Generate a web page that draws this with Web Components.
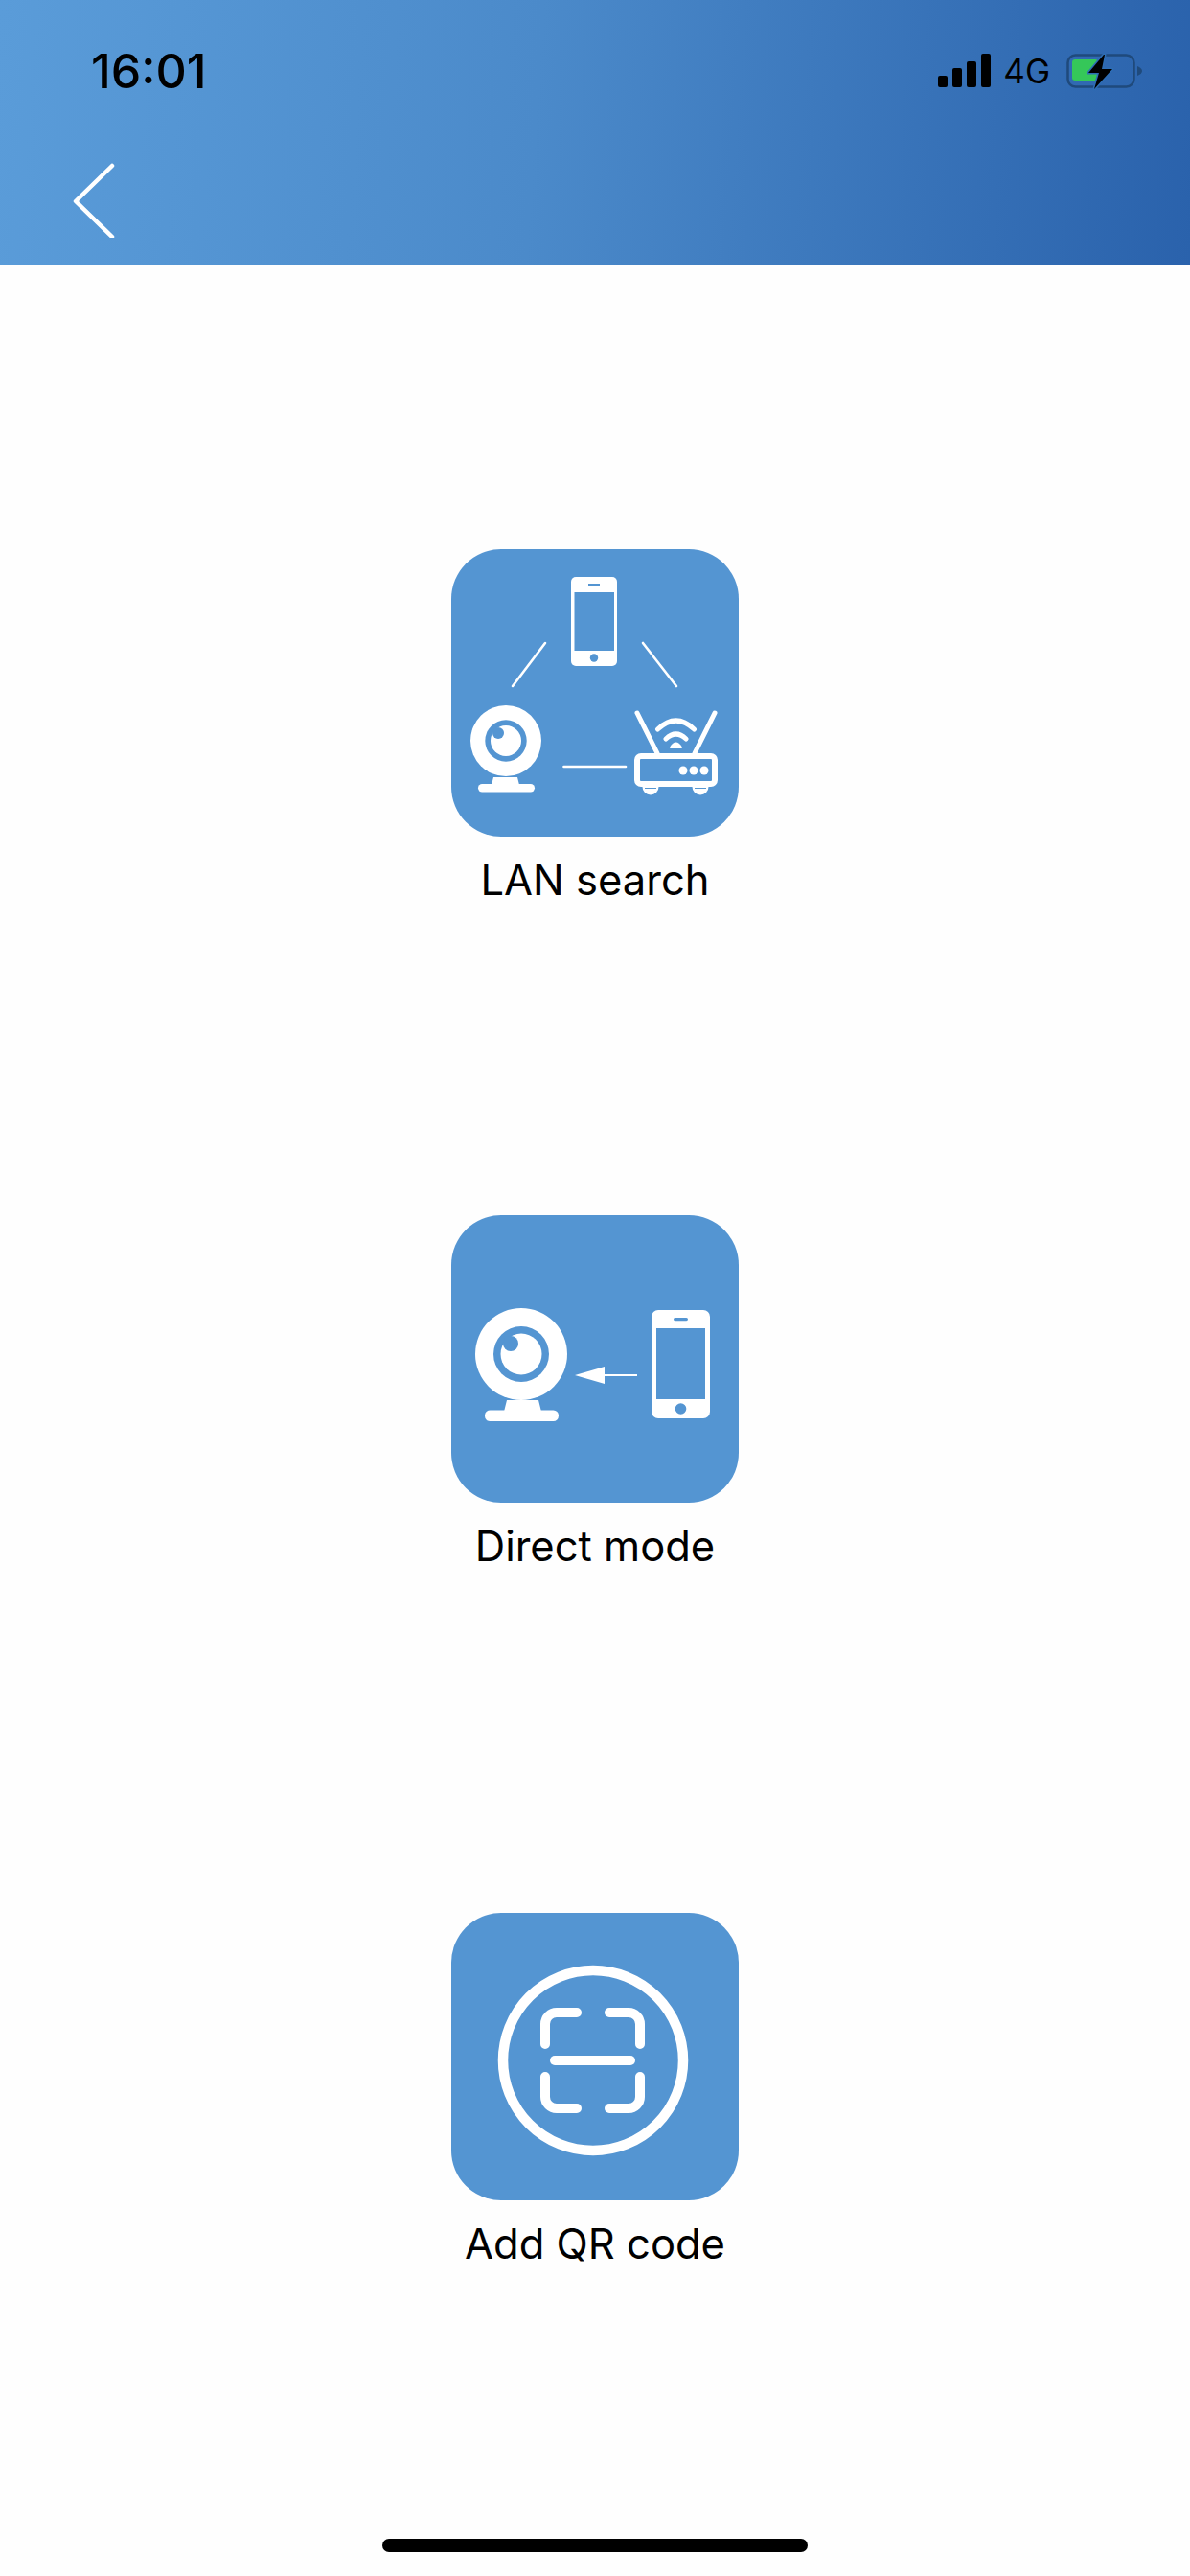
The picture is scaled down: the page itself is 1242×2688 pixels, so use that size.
<!DOCTYPE html>
<html lang="en">
<head>
<meta charset="utf-8">
<title>Add device</title>
<style>
  html, body { margin: 0; padding: 0; background: #fefefe; }
  body { font-family: Inter, "Liberation Sans", sans-serif; color: #000; }
  .page { width: 1242px; height: 2688px; display: flex; flex-direction: column; overflow: hidden; }
  svg { display: block; }
</style>
</head>
<body>
<div class="page">
  <top-header time="16:01" network="4G"></top-header>
  <option-list>
    <device-option style="margin-top:296px">
      <svg slot="icon" width="300" height="300" viewBox="0 0 300 300">
        <!-- phone -->
        <rect x="125" y="29" width="48" height="93" rx="5" fill="#fff"/>
        <rect x="128.5" y="45" width="41.5" height="61" fill="#5495d2"/>
        <rect x="143" y="36" width="12" height="2.5" fill="#5495d2"/>
        <circle cx="149" cy="113.500" r="4.200" fill="#5495d2"/>
        <!-- links -->
        <g stroke="#fff" stroke-width="2.600" stroke-linecap="round" fill="none">
          <path d="M98 98 64 143"/>
          <path d="M200 98 235 143"/>
          <path d="M117.500 227H182"/>
        </g>
        <!-- camera -->
        <circle cx="57" cy="200" r="37" fill="#fff"/>
        <circle cx="57" cy="200" r="21.700" fill="#5495d2"/>
        <circle cx="57" cy="200" r="16" fill="#fff"/>
        <circle cx="49" cy="192" r="6" fill="#5495d2"/>
        <path d="M44 238H69L71 246H42Z" fill="#fff"/>
        <rect x="28" y="245" width="59" height="8.500" rx="4.200" fill="#fff"/>
        <!-- router -->
        <g stroke="#fff" stroke-linecap="round" fill="none">
          <path d="M194 171 215 213" stroke-width="5"/>
          <path d="M275 171 254 213" stroke-width="5"/>
          <path d="M215.500 188Q234.500 170 253.500 188" stroke-width="5"/>
          <path d="M224 198Q234.500 188 245 198" stroke-width="5"/>
        </g>
        <path d="M229 207Q234.500 198 240 207Z" fill="#fff" stroke="#fff" stroke-width="2" stroke-linejoin="round"/>
        <circle cx="208" cy="248" r="8.500" fill="#fff"/>
        <circle cx="260" cy="248" r="8.500" fill="#fff"/>
        <rect x="194" y="216" width="81" height="29" rx="4" fill="#5495d2" stroke="#fff" stroke-width="6"/>
        <path d="M202 249.500H214M254 249.500H266" stroke="#5495d2" stroke-width="1.200"/>
        <circle cx="242" cy="231" r="4.500" fill="#fff"/>
        <circle cx="253" cy="231" r="4.500" fill="#fff"/>
        <circle cx="264" cy="231" r="4.500" fill="#fff"/>
      </svg>
      LAN search
    </device-option>
    <device-option style="margin-top:295px">
      <svg slot="icon" width="300" height="300" viewBox="0 0 300 300">
        <!-- camera -->
        <circle cx="73" cy="145" r="48" fill="#fff"/>
        <circle cx="73" cy="145" r="29" fill="#5495d2"/>
        <circle cx="73" cy="145" r="21.500" fill="#fff"/>
        <circle cx="62" cy="134" r="8" fill="#5495d2"/>
        <path d="M58 193H91L94 205H55Z" fill="#fff"/>
        <rect x="35" y="203.500" width="77" height="11.500" rx="5.500" fill="#fff"/>
        <!-- arrow -->
        <path d="M194 167H158" stroke="#fff" stroke-width="2.200"/>
        <path d="M129 167 160 158V176Z" fill="#fff"/>
        <!-- phone -->
        <rect x="209" y="99" width="61" height="113" rx="7" fill="#fff"/>
        <rect x="214" y="118" width="51" height="74" fill="#5495d2"/>
        <rect x="232" y="107" width="15" height="3.200" rx="1.600" fill="#5495d2"/>
        <circle cx="239.500" cy="202" r="5.800" fill="#5495d2"/>
      </svg>
      Direct mode
    </device-option>
    <device-option style="margin-top:328px">
      <svg slot="icon" width="300" height="300" viewBox="0 0 300 300">
        <circle cx="148" cy="154" r="94" fill="none" stroke="#fff" stroke-width="10.500"/>
        <g fill="none" stroke="#fff" stroke-width="10" stroke-linecap="round">
          <path d="M131 104H110A12 12 0 0 0 98 116V137"/>
          <path d="M165 104H185A12 12 0 0 1 197 116V137"/>
          <path d="M98 171V192A12 12 0 0 0 110 204H131"/>
          <path d="M197 171V192A12 12 0 0 1 185 204H165"/>
          <path d="M108 154H187"/>
        </g>
      </svg>
      Add QR code
    </device-option>
  </option-list>
  <home-indicator></home-indicator>
</div>

<template id="top-header-tpl">
  <style>
    :host {
      display: block;
      box-sizing: border-box;
      height: 277px;
      background: linear-gradient(94deg, #5a9cd9 0%, #4b8aca 45%, #2a62ac 100%);
      border-bottom: 1px solid #c9ccd0;
    }
    .status {
      display: flex;
      align-items: center;
      justify-content: space-between;
      height: 148px;
      padding: 0 49px 0 95px;
      color: #000;
    }
    .time { font: 500 50px/1 Inter, "Liberation Sans", sans-serif; }
    .right { display: flex; align-items: center; gap: 13px; }
    .net { font: 400 35px/1 Inter, "Liberation Sans", sans-serif; }
    .nav { padding: 22px 0 0 76px; }
  </style>
  <div class="status">
    <span class="time"></span>
    <div class="right">
      <svg width="55" height="36" viewBox="0 0 55 36" style="display:block">
        <rect x="0" y="23" width="10" height="12" rx="2" fill="#000"/>
        <rect x="15" y="15" width="10" height="20" rx="2" fill="#000"/>
        <rect x="30" y="8" width="10" height="27" rx="2" fill="#000"/>
        <rect x="45" y="0" width="10" height="35" rx="2" fill="#000"/>
      </svg>
      <span class="net"></span>
      <svg width="80" height="46" viewBox="0 0 80 46" style="display:block;margin-left:4px">
        <rect x="1.500" y="6.500" width="69" height="33" rx="8" fill="none" stroke="#1f4a7c" stroke-width="2.500"/>
        <path d="M74 18C77 19 79 21 79 23S77 27 74 28Z" fill="#1f4a7c"/>
        <rect x="6" y="11" width="27" height="22" rx="3" fill="#35c759"/>
        <path d="M39 6 23 25H34L29 42 48 21H37L40 6Z" fill="#000" stroke="#2e6db4" stroke-width="3" stroke-linejoin="round" paint-order="stroke"/>
      </svg>
    </div>
  </div>
  <div class="nav">
    <svg width="44" height="78" viewBox="0 0 44 78" style="display:block">
      <path d="M41 3 3 40 41 77" fill="none" stroke="#fff" stroke-width="4.500" stroke-linecap="round" stroke-linejoin="round"/>
    </svg>
  </div>
</template>

<template id="option-list-tpl">
  <style>
    :host { display: flex; flex-direction: column; align-items: center; }
  </style>
  <slot></slot>
</template>

<template id="device-option-tpl">
  <style>
    :host {
      display: flex;
      flex-direction: column;
      align-items: center;
      width: 300px;
      height: 400px;
    }
    .tile { width: 300px; height: 300px; flex: none; background: #5495d2; border-radius: 52px; }
    .label {
      margin-top: 20px;
      white-space: nowrap;
      color: #000;
      font: 400 43.5px/50px Inter, "Liberation Sans", sans-serif;
    }
  </style>
  <div class="tile"><slot name="icon"></slot></div>
  <div class="label"><slot></slot></div>
</template>

<template id="home-indicator-tpl">
  <style>
    :host { display: flex; justify-content: center; margin-top: auto; padding-bottom: 25px; }
    .bar { width: 444px; height: 14px; border-radius: 7px; background: #000; }
  </style>
  <div class="bar"></div>
</template>

<script>
function shadowFrom(el, id) {
  el.attachShadow({mode: 'open'});
  el.shadowRoot.appendChild(document.getElementById(id).content.cloneNode(true));
}

class TopHeader extends HTMLElement {
  constructor() {
    super();
    shadowFrom(this, 'top-header-tpl');
  }
  connectedCallback() {
    this.shadowRoot.querySelector('.time').textContent = this.getAttribute('time');
    this.shadowRoot.querySelector('.net').textContent = this.getAttribute('network');
  }
}
class OptionList extends HTMLElement {
  constructor() { super(); shadowFrom(this, 'option-list-tpl'); }
}
class DeviceOption extends HTMLElement {
  constructor() { super(); shadowFrom(this, 'device-option-tpl'); }
}
class HomeIndicator extends HTMLElement {
  constructor() { super(); shadowFrom(this, 'home-indicator-tpl'); }
}

customElements.define('top-header', TopHeader);
customElements.define('option-list', OptionList);
customElements.define('device-option', DeviceOption);
customElements.define('home-indicator', HomeIndicator);
</script>
</body>
</html>
